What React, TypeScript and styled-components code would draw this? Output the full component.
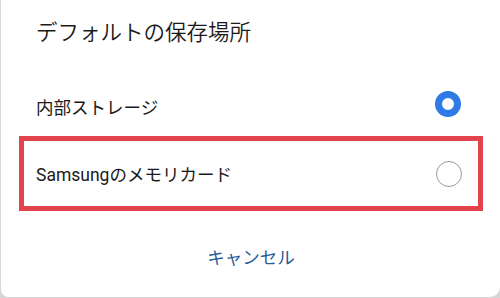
import React from "react";
import styled, { createGlobalStyle } from "styled-components";

const Global = createGlobalStyle`
  html, body { margin: 0; padding: 0; background: #d6d6d6; }
  body { width: 500px; height: 298px; overflow: hidden; font-family: Roboto, "Noto Sans CJK JP", "Noto Sans", sans-serif; }
`;

const Dialog = styled.div`
  box-sizing: border-box;
  width: 500px;
  height: 297px;
  background: #ffffff;
  border-left: 1.5px solid #d9d9d9;
  border-radius: 0 0 10px 8px;
  display: flex;
  flex-direction: column;
`;

const Title = styled.div`
  height: 72px;
  display: flex;
  align-items: center;
  padding: 0 0 12px 35px;
  box-sizing: border-box;
  font-size: 21.5px;
  font-weight: 350;
  color: #1a1a1a;
`;

const Row = styled.div<{ $boxed?: boolean }>`
  box-sizing: border-box;
  display: flex;
  align-items: center;
  justify-content: space-between;
  height: ${(p) => (p.$boxed ? "75px" : "64px")};
  margin: ${(p) => (p.$boxed ? "0 17px 0 18px" : "0")};
  padding: ${(p) => (p.$boxed ? "0 16px 0 12px" : "0 39px 0 35px")};
  border: ${(p) => (p.$boxed ? "5px solid #e2434d" : "none")};
`;

const Label = styled.span<{ $shift?: number }>`
  font-size: 17.5px;
  font-weight: 400;
  color: #1a1a1a;
  margin-top: ${(p) => p.$shift ?? 0}px;
`;

const Radio = styled.span<{ $checked?: boolean }>`
  box-sizing: border-box;
  width: 26px;
  height: 26px;
  border-radius: 50%;
  border: ${(p) => (p.$checked ? "7.5px solid #2f7ae5" : "1.5px solid #9a9a9a")};
  background: #fff;
`;

const Footer = styled.div`
  display: flex;
  justify-content: center;
  padding-top: 30px;
`;

const Cancel = styled.span`
  font-size: 17.5px;
  font-weight: 400;
  line-height: 34px;
  color: #2a5b98;
  padding-left: 1px;
`;

export default function App() {
  return (
    <>
      <Global />
      <Dialog>
        <Title>デフォルトの保存場所</Title>
        <Row>
          <Label $shift={4}>内部ストレージ</Label>
          <Radio $checked />
        </Row>
        <Row $boxed>
          <Label>Samsungのメモリカード</Label>
          <Radio />
        </Row>
        <Footer>
          <Cancel>キャンセル</Cancel>
        </Footer>
      </Dialog>
    </>
  );
}
